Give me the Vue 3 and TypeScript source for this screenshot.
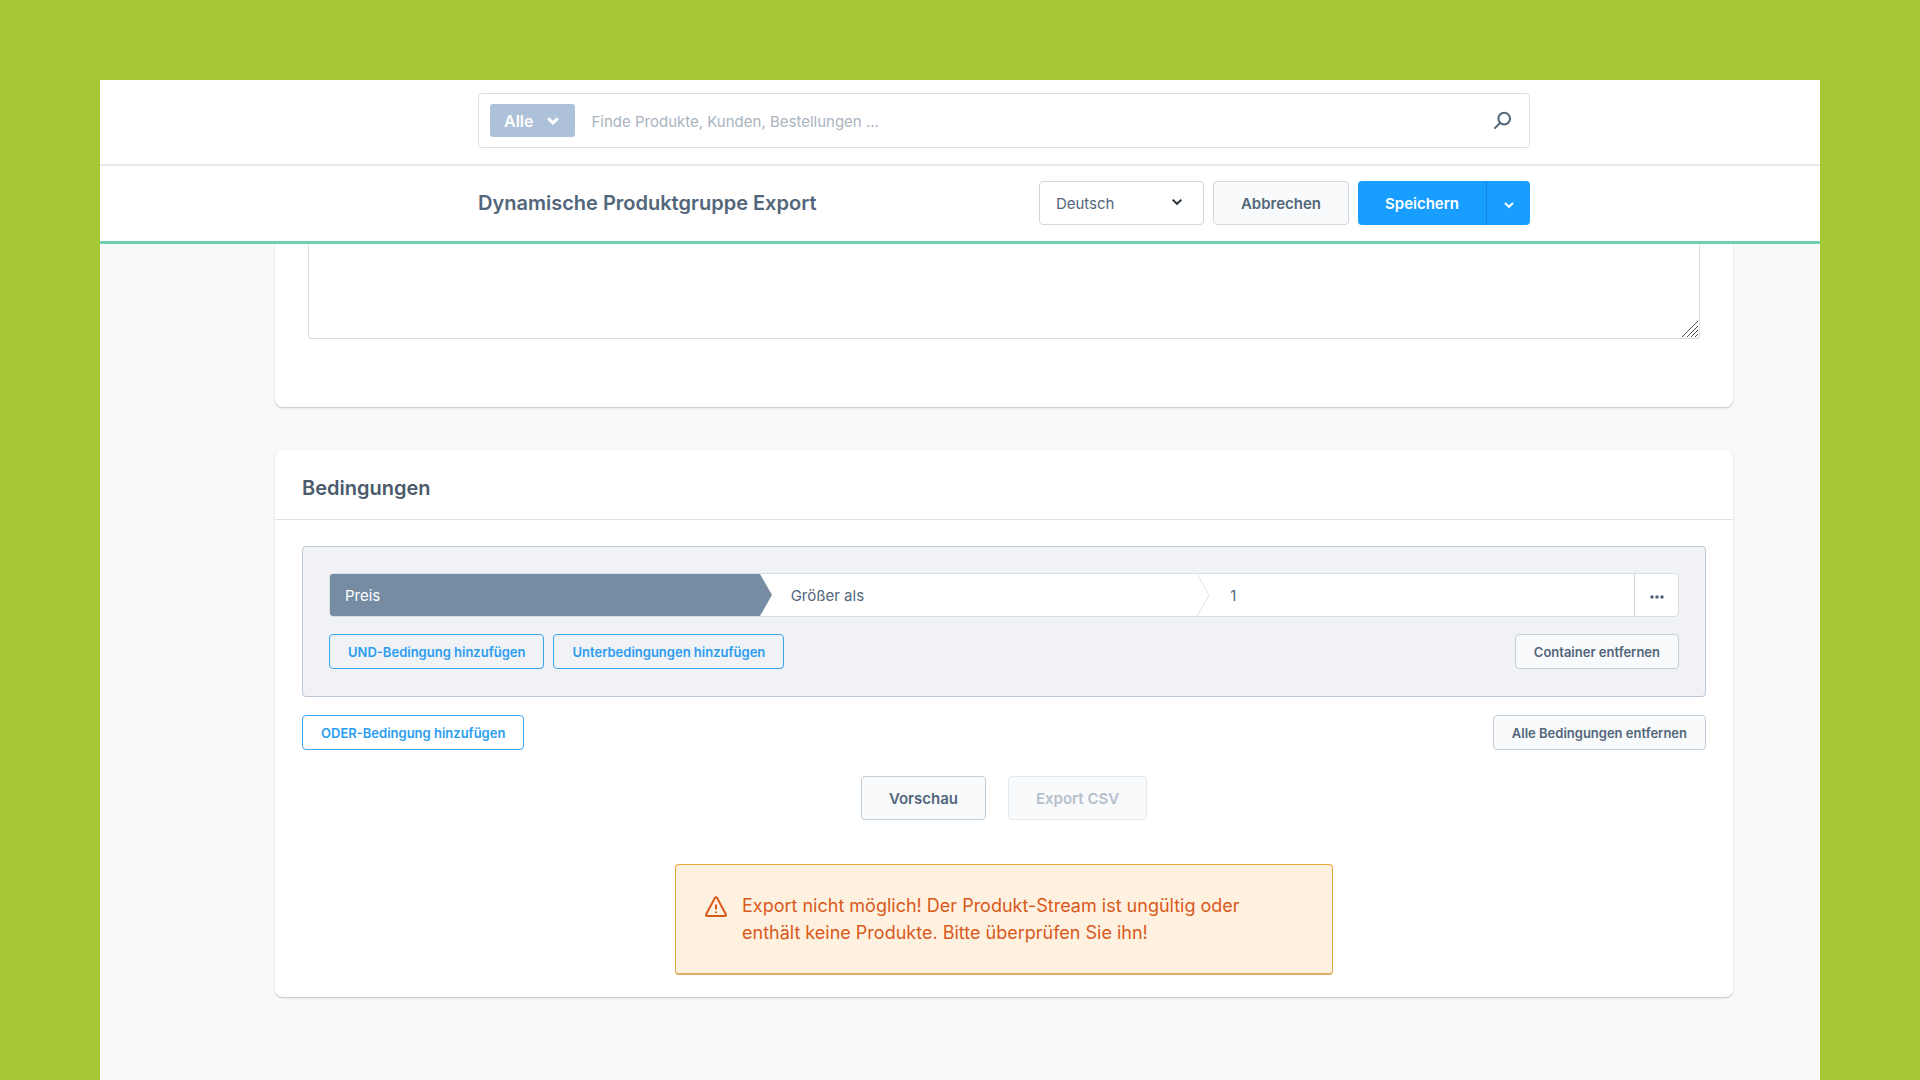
<script setup lang="ts">
import { ref } from 'vue'

const query = ref<string>('')
const language = ref<string>('Deutsch')
const description = ref<string>('')
const field = ref<string>('Preis')
const operator = ref<string>('Größer als')
const amount = ref<string>('1')
</script>

<template>
  <div class="stage">
    <div class="window">
      <header class="search-header">
        <form class="search column" role="search" @submit.prevent>
          <button type="button" class="search-type">
            Alle
            <svg width="12" height="8" viewBox="0 0 12 8" aria-hidden="true">
              <path d="M1.2 1.4 6 6l4.8-4.6" />
            </svg>
          </button>
          <input v-model="query" type="text" aria-label="Suche" placeholder="Finde Produkte, Kunden, Bestellungen ..." />
          <button type="submit" class="search-submit" aria-label="Suchen">
            <svg width="20" height="20" viewBox="0 0 20 20" aria-hidden="true">
              <circle cx="12.2" cy="7.6" r="5.8" />
              <path d="M8.2 11.8 2.4 17.6" />
            </svg>
          </button>
        </form>
      </header>

      <div class="title-bar">
        <div class="title-row column">
          <h1>Dynamische Produktgruppe Export</h1>
          <div class="actions">
            <div class="language">
              <select v-model="language" aria-label="Sprache">
                <option>Deutsch</option>
                <option>English</option>
              </select>
              <svg width="12" height="8" viewBox="0 0 12 8" aria-hidden="true">
                <path d="M1.6 1.6 6 5.8l4.4-4.2" />
              </svg>
            </div>
            <button type="button" class="button">Abbrechen</button>
            <div class="split">
              <button type="button" class="save">Speichern</button>
              <button type="button" class="save-more" aria-label="Weitere Optionen">
                <svg width="12" height="8" viewBox="0 0 12 8" aria-hidden="true">
                  <path d="M2 2 6 5.8 10 2" />
                </svg>
              </button>
            </div>
          </div>
        </div>
      </div>

      <main class="content">
        <section class="card card-first">
          <div class="area">
            <textarea v-model="description" aria-label="Beschreibung"></textarea>
            <svg class="grip" width="16" height="16" viewBox="0 0 16 16" aria-hidden="true">
              <path d="M0 16 16 0M5 16 16 5M9 16l7-7M13 16l3-3" />
            </svg>
          </div>
        </section>

        <section class="card">
          <h2>Bedingungen</h2>
          <div class="card-body">
            <div class="group">
              <div class="rule">
                <div class="segment segment-type">
                  <select v-model="field" aria-label="Feld">
                    <option>Preis</option>
                    <option>Hersteller</option>
                  </select>
                  <svg class="arrow" width="13" height="42" viewBox="0 0 13 42" aria-hidden="true">
                    <path d="M0 0 12 21 0 42z" fill="#758ca3" />
                  </svg>
                </div>
                <div class="segment">
                  <select v-model="operator" aria-label="Operator">
                    <option>Größer als</option>
                    <option>Kleiner als</option>
                  </select>
                  <svg class="arrow" width="13" height="42" viewBox="0 0 13 42" aria-hidden="true">
                    <path d="M0 0 12 21 0 42" fill="#fff" stroke="#dde3e9" />
                  </svg>
                </div>
                <div class="segment segment-value">
                  <input v-model="amount" type="text" aria-label="Wert" />
                </div>
                <button type="button" class="more" aria-label="Menü">
                  <svg width="14" height="4" viewBox="0 0 14 4" aria-hidden="true">
                    <circle cx="2" cy="2" r="1.8" />
                    <circle cx="7" cy="2" r="1.8" />
                    <circle cx="12" cy="2" r="1.8" />
                  </svg>
                </button>
              </div>
              <div class="button-row">
                <button type="button" class="small primary">UND-Bedingung hinzufügen</button>
                <button type="button" class="small primary">Unterbedingungen hinzufügen</button>
                <button type="button" class="small last">Container entfernen</button>
              </div>
            </div>
            <div class="button-row">
              <button type="button" class="small primary">ODER-Bedingung hinzufügen</button>
              <button type="button" class="small last">Alle Bedingungen entfernen</button>
            </div>
            <div class="preview-row">
              <button type="button" class="button strong">Vorschau</button>
              <button type="button" class="button" disabled>Export CSV</button>
            </div>
            <div class="alert" role="alert">
              <svg width="22" height="22" viewBox="0 0 22 22" aria-hidden="true">
                <path d="M9.9 1.9c.5-.9 1.7-.9 2.2 0l8.7 16.4c.5.9-.1 1.8-1.1 1.8H2.3c-1 0-1.6-.9-1.1-1.8z" />
                <path d="M11 8.4v5M11 15.4v1.6" />
              </svg>
              <p>Export nicht möglich! Der Produkt-Stream ist ungültig oder enthält keine Produkte. Bitte überprüfen Sie ihn!</p>
            </div>
          </div>
        </section>
      </main>
    </div>
  </div>
</template>

<style>
body {
  margin: 0;
  background: #a5c834;
}
</style>

<style scoped>
* {
  box-sizing: border-box;
}

.stage {
  display: flex;
  min-height: 100vh;
  padding: 80px 100px 0;
  background: #a5c834;
  color: #52667a;
  font-family: Inter, "Liberation Sans", sans-serif;
  font-size: 15px;
}

button,
input,
select,
textarea {
  margin: 0;
  font: inherit;
  color: inherit;
}

button {
  cursor: pointer;
  white-space: nowrap;
}

svg {
  flex: none;
  fill: none;
  stroke: currentColor;
  stroke-width: 2;
}

.window {
  display: flex;
  flex: 1;
  flex-direction: column;
  min-width: 0;
  background: #f9fafc;
}

.search-header,
.title-bar {
  padding-left: 88px;
  background: #fff;
}

.search-header {
  padding-top: 13px;
  padding-bottom: 16px;
  border-bottom: 2px solid #e4e7ec;
}

.column {
  width: 100%;
  max-width: 1052px;
  margin: 0 auto;
}

.search {
  display: flex;
  align-items: center;
  height: 55px;
  padding: 0 17px 0 11px;
  border: 1px solid #d8dfe6;
  border-radius: 4px;
}

.search-type {
  display: flex;
  align-items: center;
  gap: 14px;
  height: 33px;
  padding: 0 16px 0 14px;
  border: 0;
  border-radius: 3px;
  background: #adc1d9;
  color: #fff;
  font-size: 16px;
  font-weight: 600;
}

.search-type svg {
  stroke-width: 3;
}

.search input {
  flex: 1;
  min-width: 0;
  margin-left: 16px;
  padding: 1px 0 0;
  border: 0;
  outline: 0;
  background: none;
}

.search input::placeholder {
  color: #a9b4c0;
  opacity: 1;
}

.search-submit {
  display: flex;
  padding: 0;
  border: 0;
  background: none;
}

.title-bar {
  padding-top: 15px;
  padding-bottom: 16px;
  border-bottom: 3px solid #6fd0ab;
}

.title-row {
  display: flex;
  align-items: center;
  justify-content: space-between;
}

h1 {
  margin: 0;
  font-size: 20px;
  font-weight: 600;
}

.actions {
  display: flex;
  gap: 9px;
}

.language {
  position: relative;
  width: 165px;
}

.language select {
  width: 100%;
  height: 44px;
  padding: 1px 16px 0;
  appearance: none;
  border: 1px solid #d1d9e0;
  border-radius: 4px;
  background: #fff;
}

.language svg {
  position: absolute;
  top: 17px;
  right: 21px;
  color: #29333d;
  pointer-events: none;
}

.button {
  height: 44px;
  padding: 1px 27px 0;
  border: 1px solid #d1d9e0;
  border-radius: 4px;
  background: #f9fafc;
  font-weight: 600;
}

.button.strong {
  border-color: #c2cfd8;
}

.button:disabled {
  border-color: #e4e9ee;
  color: #b5c0cb;
}

.split {
  display: flex;
}

.save,
.save-more {
  height: 44px;
  border: 0;
  background: #189eff;
  color: #fff;
}

.save {
  padding: 1px 27px 0;
  border-radius: 4px 0 0 4px;
  font-weight: 600;
}

.save-more {
  display: flex;
  align-items: center;
  justify-content: center;
  width: 44px;
  padding: 3px 0 0;
  border-left: 1px solid #0f86dd;
  border-radius: 0 4px 4px 0;
}

.content {
  display: flex;
  flex: 1;
  flex-direction: column;
  gap: 43px;
  padding: 0 0 40px 88px;
}

.card {
  width: 100%;
  max-width: 1458px;
  margin: 0 auto;
  border-radius: 8px;
  background: #fff;
  box-shadow: 0 1px 1px rgba(0, 0, 0, 0.1), 0 1px 3px rgba(0, 0, 0, 0.14);
}

.card-first {
  padding: 0 33px 68px;
  border-radius: 0 0 8px 8px;
  clip-path: inset(0 -8px -8px);
}

.area {
  position: relative;
}

textarea {
  display: block;
  width: 100%;
  height: 95px;
  padding: 12px 16px;
  resize: none;
  border: 1px solid #d5dce4;
  border-top: 0;
  border-radius: 0 0 4px 4px;
  background: #fff;
}

.grip {
  position: absolute;
  right: 2px;
  bottom: 2px;
  color: #4d4d4d;
  stroke-width: 1;
  pointer-events: none;
}

h2 {
  margin: 0;
  padding: 26px 27px 19px;
  border-bottom: 1px solid #dbe2e9;
  color: #4a5b6c;
  font-size: 20px;
  font-weight: 600;
  line-height: 24px;
}

.card-body {
  padding: 26px 27px 22px;
}

.group {
  margin-bottom: 18px;
  padding: 26px 26px 27px;
  border: 1px solid #bcc8d6;
  border-radius: 4px;
  background: #f0f2f5;
}

.rule {
  display: grid;
  grid-template-columns: 430fr 438fr 437fr 44px;
  height: 44px;
  margin-bottom: 17px;
  border: 1px solid #d8dfe6;
  border-radius: 4px;
  background: #fff;
}

.segment {
  position: relative;
  display: flex;
}

.segment select,
.segment input {
  width: 100%;
  min-width: 0;
  padding: 1px 31px 0;
  appearance: none;
  border: 0;
  outline: 0;
  border-radius: 0;
  background: none;
}

.segment-type select {
  padding-left: 15px;
  border-radius: 3px 0 0 3px;
  background: #758ca3;
  color: #fff;
}

.segment-value input {
  padding-left: 33px;
}

.arrow {
  position: absolute;
  top: 0;
  left: 100%;
  z-index: 1;
  stroke: none;
  stroke-width: 1;
}

.more {
  display: flex;
  align-items: center;
  justify-content: center;
  padding: 3px 0 0;
  border: 0;
  border-left: 1px solid #d1d9e0;
  background: none;
}

.more svg {
  fill: currentColor;
  stroke: none;
}

.button-row {
  display: flex;
  gap: 9px;
}

.small {
  height: 35px;
  padding: 0 18px;
  border: 1px solid #c4ced9;
  border-radius: 4px;
  background: #f9fafc;
  font-size: 13px;
  font-weight: 600;
}

.small.primary {
  border-color: #3ba5f0;
  background: none;
  color: #2b9df0;
}

.small.last {
  margin-left: auto;
}

.preview-row {
  display: flex;
  justify-content: center;
  gap: 22px;
  margin: 26px 0 44px;
}

.alert {
  display: flex;
  gap: 15px;
  width: 100%;
  max-width: 658px;
  margin: 0 auto;
  padding: 27px 90px 27px 29px;
  border: 1px solid #e9ab35;
  border-bottom: 2px solid #dfae62;
  border-radius: 4px;
  background: #fff1df;
  color: #d9591c;
}

.alert svg {
  margin-top: 4px;
}

.alert p {
  margin: 0;
  font-size: 18px;
  line-height: 27px;
}
</style>
